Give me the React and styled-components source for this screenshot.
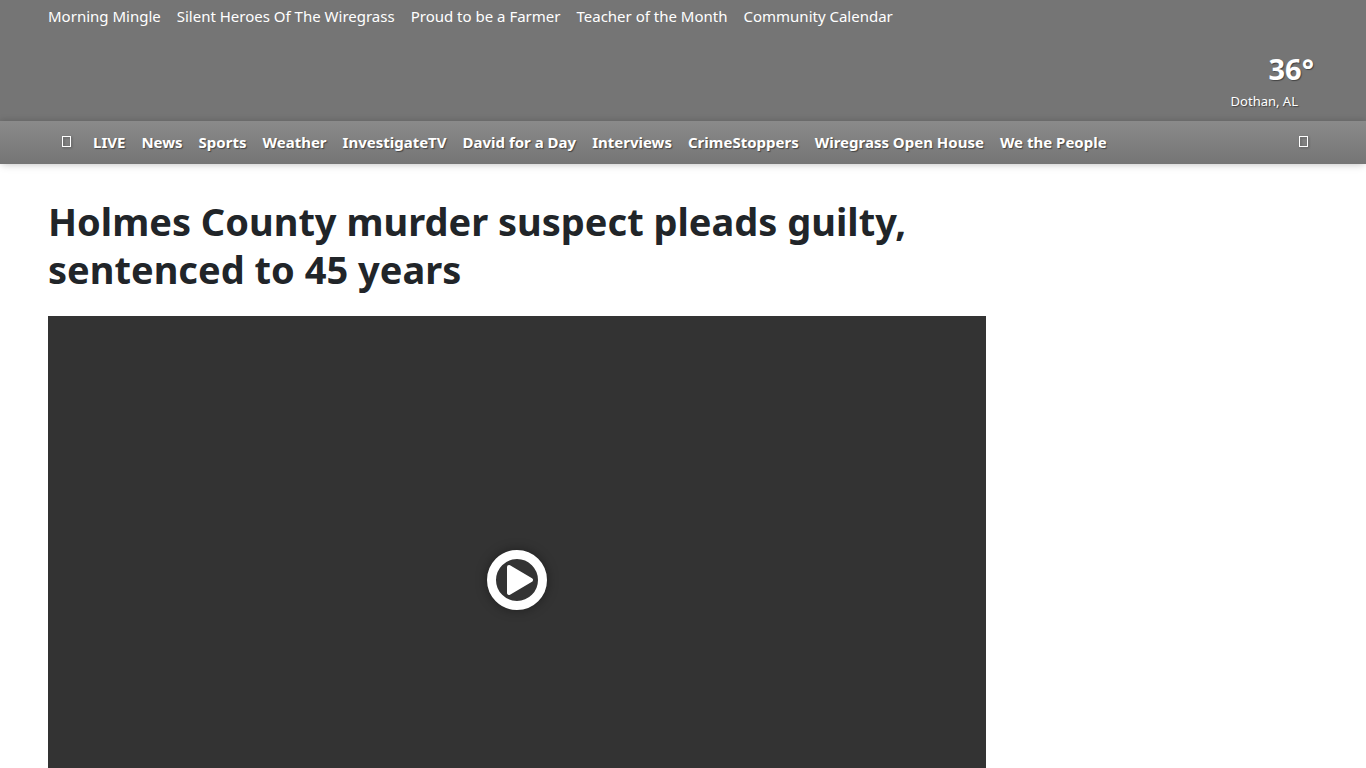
import styled, { createGlobalStyle } from "styled-components";

const GlobalStyle = createGlobalStyle`
  * {
    box-sizing: border-box;
  }

  body {
    margin: 0;
    background: #ffffff;
    color: #212529;
    font-family: "Segoe UI", "Noto Sans", "Open Sans", sans-serif;
    font-size: 15px;
    line-height: 24px;
  }
`;

const Header = styled.header`
  background: #757575;
  box-shadow: 0 4px 8px -2px rgba(0, 0, 0, 0.12);
`;

const TopLinks = styled.nav`
  display: flex;
  flex-wrap: wrap;
  gap: 0 16px;
  padding: 4px 48px;
`;

const TopLink = styled.a`
  color: #ffffff;
  text-decoration: none;
`;

const WeatherBar = styled.div`
  display: flex;
  justify-content: flex-end;
  padding: 15px 48px 9px;
`;

const WeatherLink = styled.a`
  display: flex;
  flex-direction: column;
  align-items: flex-end;
  color: #ffffff;
  text-decoration: none;
  text-shadow: 1px 1px 1px #444444;
`;

const Temperature = styled.span`
  padding-right: 4px;
  font-size: 29px;
  font-weight: 700;
  line-height: 44px;
`;

const City = styled.span`
  padding-right: 20px;
  font-size: 13px;
  line-height: 21px;
`;

const MainNav = styled.nav`
  display: flex;
  align-items: center;
  min-height: 43px;
  padding: 0 48px 2px;
  background: linear-gradient(#8a8a8a, #757575);
  box-shadow: 0 -1px 6px rgba(0, 0, 0, 0.15);
`;

const NavList = styled.ul`
  display: flex;
  flex: 1;
  flex-wrap: wrap;
  gap: 0 16px;
  margin: 0;
  padding: 0;
  list-style: none;
`;

const NavLink = styled.a`
  color: #ffffff;
  font-weight: 700;
  text-decoration: none;
  text-shadow: 1px 1px 1px #444444;
`;

const IconButton = styled.button`
  display: flex;
  align-items: center;
  width: ${(props) => props.$width}px;
  height: 40px;
  padding: 0 0 0 ${(props) => props.$inset}px;
  border: none;
  background: transparent;
  color: #ffffff;
  cursor: pointer;

  svg {
    overflow: visible;
    filter: drop-shadow(1px 1px 1px #555555);
  }
`;

const Content = styled.main`
  display: grid;
  grid-template-columns: minmax(0, 1fr) 300px;
  gap: 32px;
  padding: 33px 48px 0;
`;

const Title = styled.h1`
  margin: 0 0 23px;
  font-size: 38px;
  font-weight: 700;
  line-height: 48px;
`;

const VideoPlayer = styled.div`
  display: flex;
  align-items: center;
  justify-content: center;
  aspect-ratio: 16 / 9;
  background: #333333;
`;

const PlayButton = styled.button`
  display: flex;
  padding: 0;
  border: none;
  border-radius: 50%;
  background: transparent;
  box-shadow: 0 0 12px rgba(0, 0, 0, 0.4);
  cursor: pointer;
`;

const topLinks = [
  "Morning Mingle",
  "Silent Heroes Of The Wiregrass",
  "Proud to be a Farmer",
  "Teacher of the Month",
  "Community Calendar",
];

const navLinks = [
  "LIVE",
  "News",
  "Sports",
  "Weather",
  "InvestigateTV",
  "David for a Day",
  "Interviews",
  "CrimeStoppers",
  "Wiregrass Open House",
  "We the People",
];

const BoxIcon = () => (
  <svg width="10" height="12" viewBox="0 0 10 12" aria-hidden="true">
    <rect
      x="0.5"
      y="0.5"
      width="8"
      height="10"
      fill="none"
      stroke="currentColor"
    />
  </svg>
);

const PlayIcon = () => (
  <svg width="60" height="60" viewBox="0 0 60 60" aria-hidden="true">
    <circle
      cx="30"
      cy="30"
      r="25.5"
      fill="none"
      stroke="#ffffff"
      strokeWidth="9"
    />
    <path
      d="M22 17 L44 30 L22 43 Z"
      fill="#ffffff"
      stroke="#ffffff"
      strokeWidth="4"
      strokeLinejoin="round"
    />
  </svg>
);

const App = () => {
  return (
    <>
      <GlobalStyle />
      <Header>
        <TopLinks>
          {topLinks.map((label) => (
            <TopLink key={label} href="#">
              {label}
            </TopLink>
          ))}
        </TopLinks>
        <WeatherBar>
          <WeatherLink href="#">
            <Temperature>36°</Temperature>
            <City>Dothan, AL</City>
          </WeatherLink>
        </WeatherBar>
        <MainNav>
          <IconButton type="button" $width={45} $inset={14}>
            <BoxIcon />
          </IconButton>
          <NavList>
            {navLinks.map((label) => (
              <li key={label}>
                <NavLink href="#">{label}</NavLink>
              </li>
            ))}
          </NavList>
          <IconButton type="button" $width={28} $inset={9}>
            <BoxIcon />
          </IconButton>
        </MainNav>
      </Header>
      <Content>
        <article>
          <Title>Holmes County murder suspect pleads guilty, sentenced to 45 years</Title>
          <VideoPlayer>
            <PlayButton type="button">
              <PlayIcon />
            </PlayButton>
          </VideoPlayer>
        </article>
      </Content>
    </>
  );
};

export default App;
